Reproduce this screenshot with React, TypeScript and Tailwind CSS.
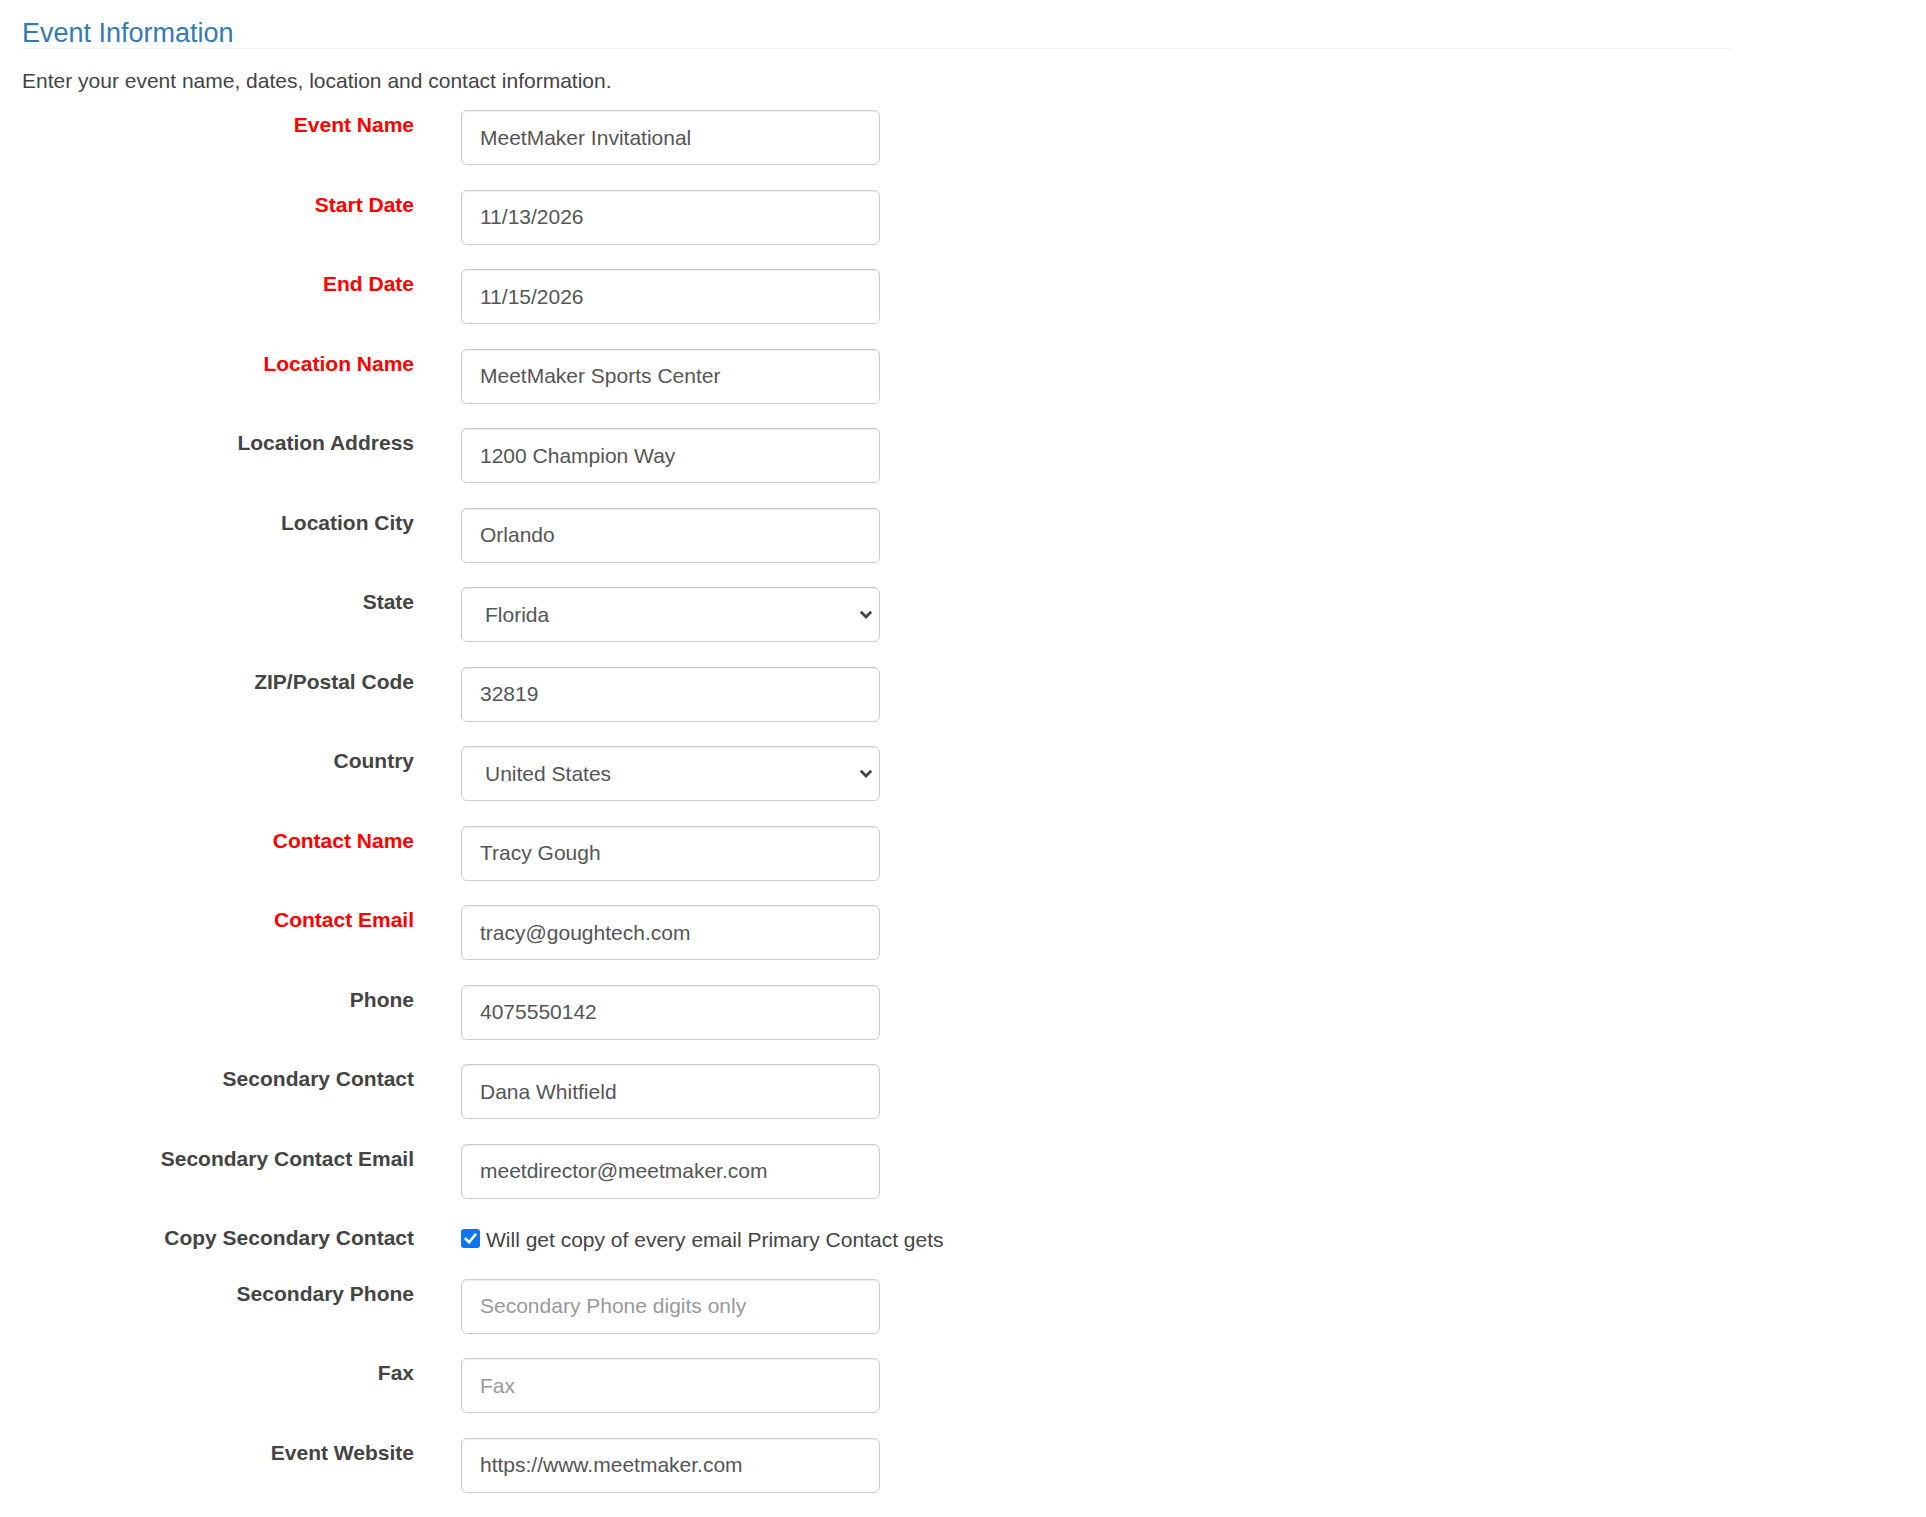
import React from "react";

type Row =
  | { kind: "input"; label: string; req?: boolean; value?: string; placeholder?: string }
  | { kind: "select"; label: string; req?: boolean; value: string }
  | { kind: "check"; label: string; text: string };

const rows: Row[] = [
  { kind: "input", label: "Event Name", req: true, value: "MeetMaker Invitational" },
  { kind: "input", label: "Start Date", req: true, value: "11/13/2026" },
  { kind: "input", label: "End Date", req: true, value: "11/15/2026" },
  { kind: "input", label: "Location Name", req: true, value: "MeetMaker Sports Center" },
  { kind: "input", label: "Location Address", value: "1200 Champion Way" },
  { kind: "input", label: "Location City", value: "Orlando" },
  { kind: "select", label: "State", value: "Florida" },
  { kind: "input", label: "ZIP/Postal Code", value: "32819" },
  { kind: "select", label: "Country", value: "United States" },
  { kind: "input", label: "Contact Name", req: true, value: "Tracy Gough" },
  { kind: "input", label: "Contact Email", req: true, value: "tracy@goughtech.com" },
  { kind: "input", label: "Phone", value: "4075550142" },
  { kind: "input", label: "Secondary Contact", value: "Dana Whitfield" },
  { kind: "input", label: "Secondary Contact Email", value: "meetdirector@meetmaker.com" },
  { kind: "check", label: "Copy Secondary Contact", text: "Will get copy of every email Primary Contact gets" },
  { kind: "input", label: "Secondary Phone", placeholder: "Secondary Phone digits only" },
  { kind: "input", label: "Fax", placeholder: "Fax" },
  { kind: "input", label: "Event Website", value: "https://www.meetmaker.com" },
];

function Label({ text, req }: { text: string; req?: boolean }) {
  return (
    <div
      className={
        "w-[392px] shrink-0 text-right font-bold text-[21px] leading-[30px] " +
        (req ? "text-[#ff0000]" : "text-[#444444]")
      }
    >
      {text}
    </div>
  );
}

export default function App() {
  return (
    <div
      className="min-h-[1517px] bg-white pl-[22px] pt-[19px]"
      style={{ fontFamily: '"Liberation Sans", Arial, Helvetica, sans-serif' }}
    >
      <div className="w-[1709px] border-b-[1.5px] border-[#eeeeee] text-[27px] leading-[29px] text-[#337ab7]">
        Event Information
      </div>
      <div className="mt-[17px] text-[21px] leading-[30px] text-[#444444]">
        Enter your event name, dates, location and contact information.
      </div>
      <div className="mt-[14px] flex flex-col">
        {rows.map((r) => {
          if (r.kind === "check") {
            return (
              <div key={r.label} className="flex h-[31px] mb-[24.5px] gap-[47px]">
                <Label text={r.label} />
                <div className="flex items-start gap-[6px] h-[30px]">
                  <span className="mt-[6px] flex h-[19px] w-[19px] items-center justify-center rounded-[3px] bg-[#0b76ef]">
                    <svg width="15" height="15" viewBox="0 0 16 16">
                      <path d="M3 8.5 L6.5 12 L13 4" fill="none" stroke="#ffffff" strokeWidth="2.8" strokeLinecap="square" />
                    </svg>
                  </span>
                  <span className="pt-[2px] text-[21px] leading-[30px] text-[#444444]">{r.text}</span>
                </div>
              </div>
            );
          }
          return (
            <div key={r.label} className="flex mb-[24.5px] gap-[47px]">
              <Label text={r.label} req={r.req} />
              {r.kind === "select" ? (
                <div className="flex h-[55px] w-[419px] items-center justify-between rounded-[6px] border border-[#cccccc] bg-white pl-[23px] pr-[6px] text-[21px] text-[#555555] shadow-[inset_0_1px_1px_rgba(0,0,0,0.075)]">
                  <span>{r.value}</span>
                  <svg width="14" height="9" viewBox="0 0 14 9">
                    <path d="M1.8 1.8 L7 7 L12.2 1.8" fill="none" stroke="#444444" strokeWidth="2.8" />
                  </svg>
                </div>
              ) : (
                <input
                  readOnly
                  value={r.value ?? ""}
                  placeholder={r.placeholder}
                  className="h-[55px] w-[419px] rounded-[6px] border border-[#cccccc] bg-white px-[18px] text-[21px] text-[#555555] placeholder:text-[#999999] outline-none shadow-[inset_0_1px_1px_rgba(0,0,0,0.075)]"
                  style={{ fontFamily: '"Liberation Sans", Arial, Helvetica, sans-serif' }}
                />
              )}
            </div>
          );
        })}
      </div>
    </div>
  );
}
